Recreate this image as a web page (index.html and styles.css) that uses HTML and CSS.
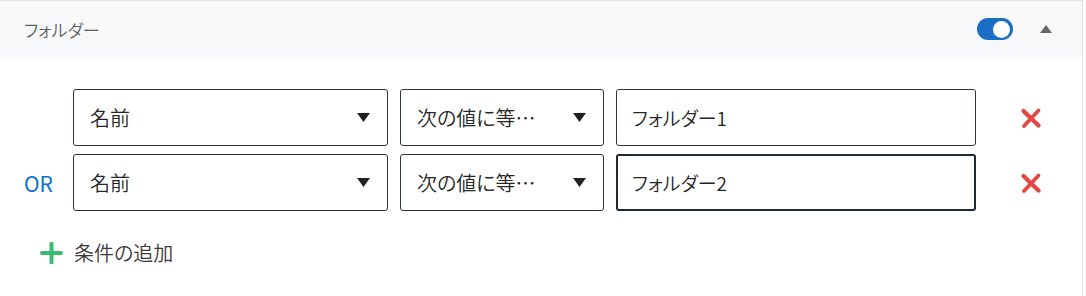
FILE: index.html
```html
<!DOCTYPE html>
<html lang="ja">
<head>
<meta charset="utf-8">
<link rel="stylesheet" href="styles.css">
</head>
<body>
<div class="panel">
  <div class="header">
    <span class="title">フォルダー</span>
    <span class="toggle"><span class="knob"></span></span>
    <svg class="collapse" width="12" height="8" viewBox="0 0 12 8"><path d="M6 0 L12 8 L0 8 Z" fill="#666"/></svg>
  </div>
  <div class="content">
    <div class="row">
      <span class="op"></span>
      <div class="box select wide"><span class="val">名前</span><svg class="caret" width="13" height="9" viewBox="0 0 13 9"><path d="M0 0 L13 0 L6.5 9 Z" fill="#222"/></svg></div>
      <div class="box select mid"><span class="val">次の値に等…</span><svg class="caret" width="13" height="9" viewBox="0 0 13 9"><path d="M0 0 L13 0 L6.5 9 Z" fill="#222"/></svg></div>
      <div class="box input"><span class="val">フォルダー1</span></div>
      <svg class="del" width="22" height="22" viewBox="0 0 22 22"><path d="M3.5 4 L18.5 18.5" stroke="#e34848" stroke-width="4.4" stroke-linecap="round"/><path d="M18.5 3.5 L4 19" stroke="#e34848" stroke-width="3.8" stroke-linecap="round"/></svg>
    </div>
    <div class="row">
      <span class="op">OR</span>
      <div class="box select wide"><span class="val">名前</span><svg class="caret" width="13" height="9" viewBox="0 0 13 9"><path d="M0 0 L13 0 L6.5 9 Z" fill="#222"/></svg></div>
      <div class="box select mid"><span class="val">次の値に等…</span><svg class="caret" width="13" height="9" viewBox="0 0 13 9"><path d="M0 0 L13 0 L6.5 9 Z" fill="#222"/></svg></div>
      <div class="box input focus"><span class="val">フォルダー2</span></div>
      <svg class="del" width="22" height="22" viewBox="0 0 22 22"><path d="M3.5 4 L18.5 18.5" stroke="#e34848" stroke-width="4.4" stroke-linecap="round"/><path d="M18.5 3.5 L4 19" stroke="#e34848" stroke-width="3.8" stroke-linecap="round"/></svg>
    </div>
    <div class="add">
      <svg class="plus" width="23" height="22" viewBox="0 0 23 22"><path d="M11.5 1.5 V20.5 M2 11 H21" stroke="#3cba73" stroke-width="4" stroke-linecap="round"/></svg>
      <span class="add-label">条件の追加</span>
    </div>
  </div>
</div>
</body>
</html>
```

FILE: styles.css
```css
html, body {
  margin: 0;
  padding: 0;
  background: #fff;
}
body {
  font-family: "Noto Sans CJK JP", "Noto Sans", sans-serif;
  font-feature-settings: "palt";
  font-weight: 350;
  color: #333;
}
.panel {
  width: 1082px;
  height: 295px;
  border-top: 1px solid #dfe2e8;
  border-right: 1px solid #dfe2e8;
}
.header {
  height: 56px;
  background: #f7f8fa;
  display: flex;
  align-items: center;
  padding: 0 30px 0 24px;
}
.title {
  flex: 1;
  font-size: 17px;
  color: #5f5f5f;
}
.toggle {
  width: 36px;
  height: 22px;
  border-radius: 11px;
  background: #1a6ec4;
  display: flex;
  align-items: center;
  justify-content: flex-end;
  padding: 0 3px;
  box-sizing: border-box;
  margin-right: 27px;
}
.knob {
  width: 17px;
  height: 17px;
  border-radius: 50%;
  background: #fff;
}
.collapse {
  display: block;
}
.content {
  padding: 32px 0 0 24px;
}
.row {
  display: flex;
  align-items: center;
  height: 57px;
  margin-bottom: 8px;
}
.op {
  width: 49px;
  font-size: 21px;
  font-weight: 400;
  color: #0b72c8;
}
.box {
  box-sizing: border-box;
  height: 57px;
  border: 1px solid #2b3440;
  border-radius: 3px;
  display: flex;
  align-items: center;
  font-size: 20px;
  color: #262626;
}
.select {
  padding: 0 17px 0 16px;
  justify-content: space-between;
  margin-right: 12px;
}
.wide { width: 315px; }
.mid { width: 204px; }
.input {
  width: 360px;
  padding-left: 15px;
  font-size: 19px;
}
.input.focus {
  border: 2px solid #1f2933;
  padding-left: 14px;
}
.caret { display: block; }
.del {
  display: block;
  margin-left: 44px;
}
.add {
  display: flex;
  align-items: center;
  margin-top: 27px;
  padding-left: 16px;
}
.plus {
  display: block;
  margin-right: 11px;
}
.add-label {
  font-size: 20px;
  color: #3a3a3a;
}
```
